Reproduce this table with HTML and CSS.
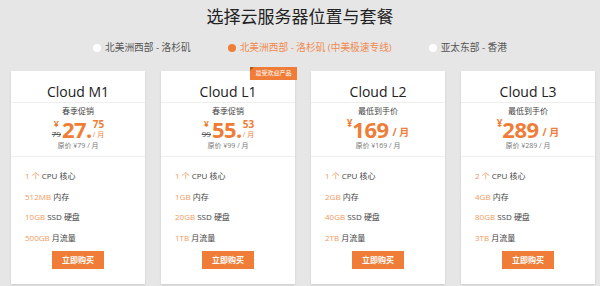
FILE: index.html
```html
<!DOCTYPE html>
<html lang="zh-CN">
<head>
<meta charset="utf-8">
<title>选择云服务器位置与套餐</title>
<link rel="stylesheet" href="styles.css">
</head>
<body>
<header class="head">
  <h1 class="title">选择云服务器位置与套餐</h1>
  <div class="regions">
    <span class="region"><i class="dot"></i>北美洲西部 - 洛杉矶</span>
    <span class="region active"><i class="dot"></i>北美洲西部 - 洛杉矶 (中美极速专线)</span>
    <span class="region"><i class="dot"></i>亚太东部 - 香港</span>
  </div>
</header>
<main class="plans">
  <section class="card">
    <h2 class="name">Cloud M1</h2>
    <div class="pricebox">
      <div class="label">春季促销</div>
      <div class="price">
        <span class="stack left"><span class="yen">¥</span><s class="old">79</s></span>
        <span class="big">27.</span>
        <span class="stack right"><span class="cents">75</span><span class="unit">/ 月</span></span>
      </div>
      <div class="orig">原价 ¥79 / 月</div>
    </div>
    <ul class="feats">
      <li><b>1 个</b> CPU 核心</li>
      <li><b>512MB</b> 内存</li>
      <li><b>10GB</b> SSD 硬盘</li>
      <li><b>500GB</b> 月流量</li>
    </ul>
    <a class="buy" href="#">立即购买</a>
  </section>
  <section class="card">
    <span class="badge">最受欢迎产品</span>
    <h2 class="name">Cloud L1</h2>
    <div class="pricebox">
      <div class="label">春季促销</div>
      <div class="price">
        <span class="stack left"><span class="yen">¥</span><s class="old">99</s></span>
        <span class="big">55.</span>
        <span class="stack right"><span class="cents">53</span><span class="unit">/ 月</span></span>
      </div>
      <div class="orig">原价 ¥99 / 月</div>
    </div>
    <ul class="feats">
      <li><b>1 个</b> CPU 核心</li>
      <li><b>1GB</b> 内存</li>
      <li><b>20GB</b> SSD 硬盘</li>
      <li><b>1TB</b> 月流量</li>
    </ul>
    <a class="buy" href="#">立即购买</a>
  </section>
  <section class="card">
    <h2 class="name">Cloud L2</h2>
    <div class="pricebox">
      <div class="label">最低到手价</div>
      <div class="price">
        <span class="yen solo">¥</span>
        <span class="big">169</span>
        <span class="unit2">/ 月</span>
      </div>
      <div class="orig">原价 ¥169 / 月</div>
    </div>
    <ul class="feats">
      <li><b>1 个</b> CPU 核心</li>
      <li><b>2GB</b> 内存</li>
      <li><b>40GB</b> SSD 硬盘</li>
      <li><b>2TB</b> 月流量</li>
    </ul>
    <a class="buy" href="#">立即购买</a>
  </section>
  <section class="card">
    <h2 class="name">Cloud L3</h2>
    <div class="pricebox">
      <div class="label">最低到手价</div>
      <div class="price">
        <span class="yen solo">¥</span>
        <span class="big">289</span>
        <span class="unit2">/ 月</span>
      </div>
      <div class="orig">原价 ¥289 / 月</div>
    </div>
    <ul class="feats">
      <li><b>2 个</b> CPU 核心</li>
      <li><b>4GB</b> 内存</li>
      <li><b>80GB</b> SSD 硬盘</li>
      <li><b>3TB</b> 月流量</li>
    </ul>
    <a class="buy" href="#">立即购买</a>
  </section>
</main>
</body>
</html>
```
FILE: styles.css
```css
* { box-sizing: border-box; }
html, body { margin: 0; padding: 0; }
body {
  background: #e6e6e6;
  font-family: "Open Sans", "Noto Sans CJK SC", sans-serif;
  color: #333;
  width: 600px;
  height: 286px;
  overflow: hidden;
}
.head { text-align: center; }
.title {
  margin: 5px 0 0;
  font-size: 17px;
  line-height: 24px;
  font-weight: 400;
  color: #222;
}
.regions {
  margin-top: 12px;
  display: flex;
  justify-content: center;
  gap: 37px;
  font-size: 9.7px;
  line-height: 14px;
  color: #555;
}
.region { display: inline-flex; align-items: center; gap: 4px; }
.dot {
  width: 8px; height: 8px; border-radius: 50%;
  background: #fff; display: inline-block;
}
.region.active { color: #f08a4f; }
.region.active .dot { background: #ef7d37; }

.plans {
  margin-top: 16px;
  padding-left: 11px;
  display: flex;
  gap: 16px;
}
.card {
  position: relative;
  width: 134px;
  height: 213px;
  background: #fff;
  box-shadow: 0 1px 2px rgba(0,0,0,0.12);
  text-align: center;
  display: flex;
  flex-direction: column;
}
.badge {
  position: absolute;
  top: -4px; right: -2px;
  width: 47px; height: 13px;
  background: #ef7d37;
  color: #fff;
  font-size: 6px;
  line-height: 13px;
  text-align: center;
}
.badge::before {
  content: "";
  position: absolute;
  left: 0; top: 0;
  border-style: solid;
  border-width: 4px 4px 0 0;
  border-color: #b9591e transparent transparent transparent;
}
.name {
  margin: 0;
  padding: 11px 0 0;
  font-size: 14px;
  line-height: 20px;
  font-weight: 400;
  color: #222;
  border-bottom: 1px solid #eee;
}
.pricebox {
  height: 54px;
  border-bottom: 1px solid #eee;
  padding-top: 3px;
}
.label { font-size: 8px; line-height: 10px; color: #444; }
.price {
  display: flex;
  justify-content: center;
  align-items: flex-end;
  height: 22px;
  margin-top: 2px;
  color: #ef7d37;
}
.stack { display: inline-flex; flex-direction: column; }
.stack.left { align-items: center; margin-right: 1px; }
.yen { font-size: 9px; line-height: 10px; font-weight: 700; color: #ef7d37; }
.old { font-size: 8px; line-height: 9px; color: #444; text-decoration-color: #555; margin-bottom: 2px; }
.big {
  font-size: 22px;
  line-height: 22px;
  font-weight: 700;
  letter-spacing: -0.5px;
}
.stack.right { align-items: flex-start; margin-left: 1px; }
.cents { font-size: 10px; line-height: 11px; font-weight: 700; }
.unit { font-size: 7px; line-height: 10px; margin-bottom: 0; }
.yen.solo { align-self: flex-start; font-size: 10px; margin-top: 0; }
.unit2 { font-size: 10px; line-height: 12px; font-weight: 700; margin-left: 4px; margin-bottom: 2px; }
.orig { font-size: 7px; line-height: 10px; color: #777; margin-top: 1px; }

.feats {
  list-style: none;
  margin: 0;
  padding: 9px 0 0 14px;
  text-align: left;
  font-size: 8px;
  line-height: 20.5px;
  color: #444;
}
.feats b { font-weight: 400; color: #f29a61; }
.buy {
  display: block;
  width: 52px;
  height: 18px;
  margin: 3px auto 0;
  background: #ef7d37;
  color: #fff;
  font-size: 8px;
  font-weight: 700;
  line-height: 18px;
  text-decoration: none;
}
```
